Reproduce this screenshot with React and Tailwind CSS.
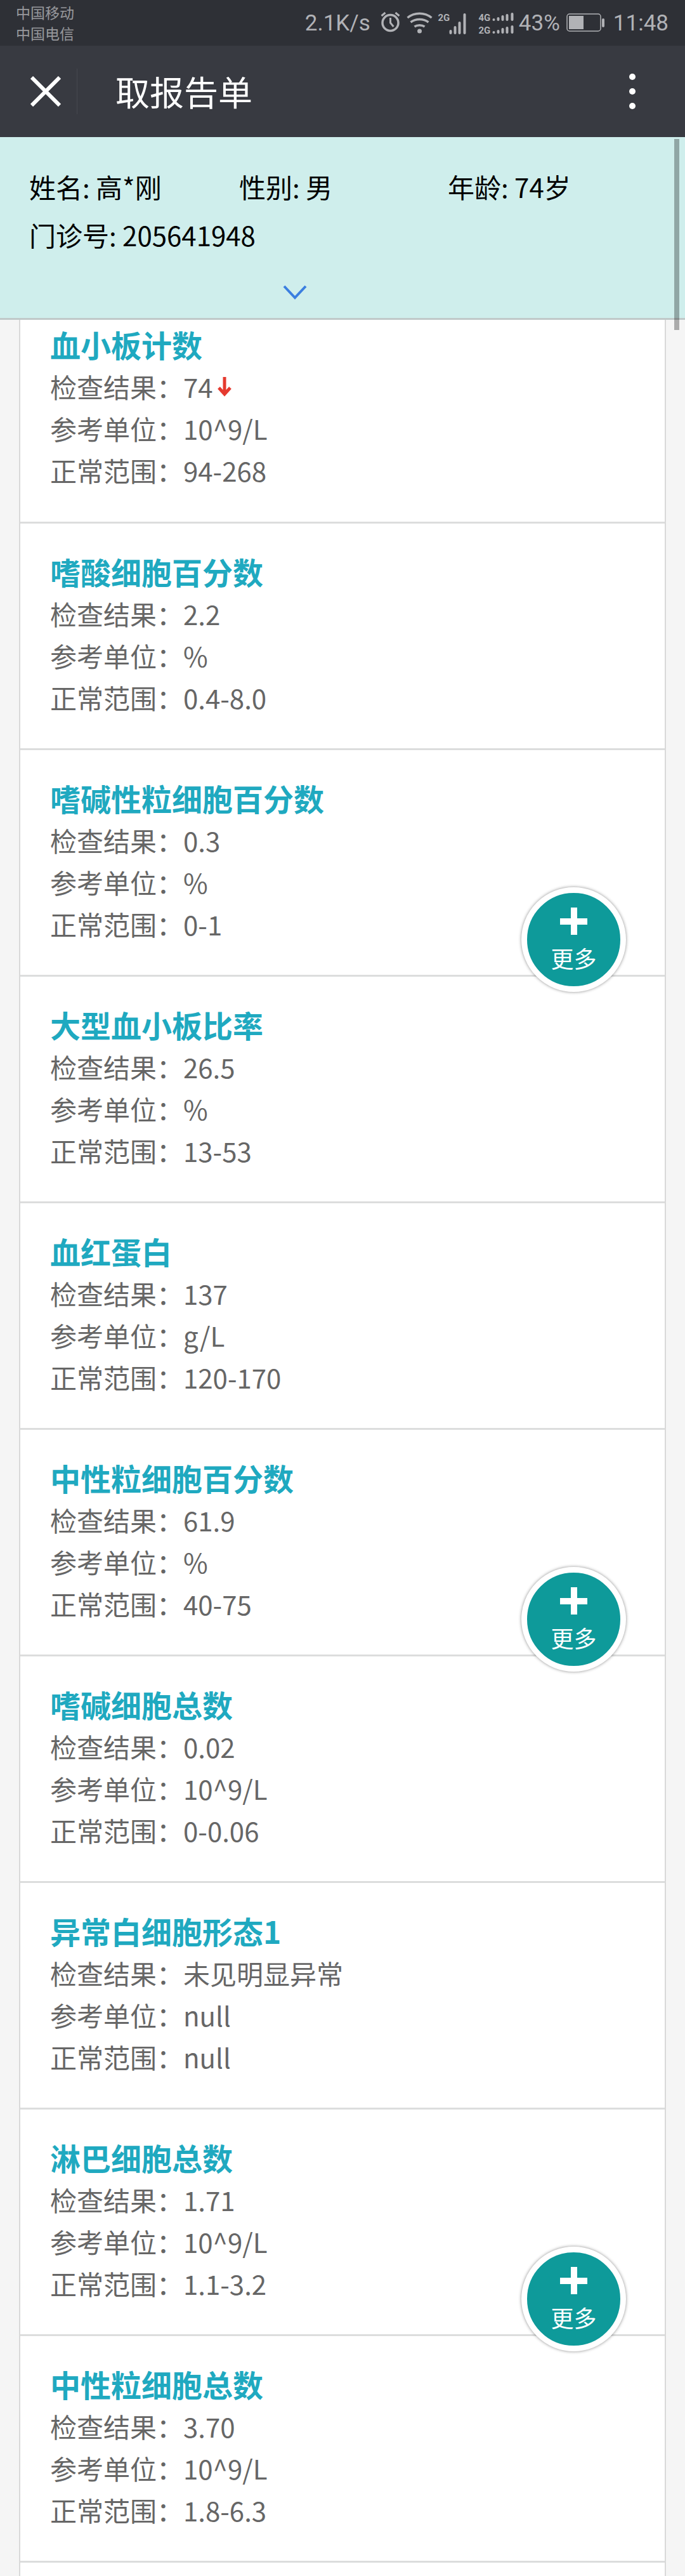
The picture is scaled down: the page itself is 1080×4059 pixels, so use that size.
import React from 'react';

const cards = [
  { name: '血小板计数', result: '74', unit: '10^9/L', range: '94-268', low: true },
  { name: '嗜酸细胞百分数', result: '2.2', unit: '%', range: '0.4-8.0' },
  { name: '嗜碱性粒细胞百分数', result: '0.3', unit: '%', range: '0-1', more: true },
  { name: '大型血小板比率', result: '26.5', unit: '%', range: '13-53' },
  { name: '血红蛋白', result: '137', unit: 'g/L', range: '120-170' },
  { name: '中性粒细胞百分数', result: '61.9', unit: '%', range: '40-75', more: true },
  { name: '嗜碱细胞总数', result: '0.02', unit: '10^9/L', range: '0-0.06' },
  { name: '异常白细胞形态1', result: '未见明显异常', unit: 'null', range: 'null' },
  { name: '淋巴细胞总数', result: '1.71', unit: '10^9/L', range: '1.1-3.2', more: true },
  { name: '中性粒细胞总数', result: '3.70', unit: '10^9/L', range: '1.8-6.3' },
];

const cjk = "font-['Noto_Sans_CJK_SC','Noto_Sans',sans-serif]";

const StatusIcons = () => (
  <svg width="215" height="40" viewBox="0 0 212 40" className="ml-[12px] shrink-0 text-[#b1b2b6]" fill="none">
    {/* alarm */}
    <circle cx="18" cy="20" r="12.5" stroke="currentColor" strokeWidth="3.5" />
    <path d="M18 12v8l5 6M4 9l6-5M32 9l-6-5" stroke="currentColor" strokeWidth="3" />
    {/* wifi */}
    <path d="M45 12c11-9 27-9 38 0M50 19c8-6 20-6 28 0M56 26c4-3 12-3 16 0" stroke="currentColor" strokeWidth="3.5" />
    <circle cx="64" cy="33" r="3.5" fill="currentColor" />
    {/* sim 1 */}
    <text x="93" y="17" fontSize="15" fontWeight="700" fill="currentColor" fontFamily="Roboto">2G</text>
    <rect x="111" y="31" width="4" height="7" rx="2" fill="currentColor" />
    <rect x="118" y="25" width="4" height="13" rx="2" fill="currentColor" />
    <rect x="125" y="18" width="4" height="20" rx="2" fill="currentColor" />
    <rect x="133" y="5" width="4" height="33" rx="2" fill="currentColor" />
    {/* sim 2 */}
    <text x="157" y="17" fontSize="15" fontWeight="700" fill="currentColor" fontFamily="Roboto">4G</text>
    <text x="157" y="37" fontSize="15" fontWeight="700" fill="currentColor" fontFamily="Roboto">2G</text>
    {[0, 20].map((dy) => (
      <g key={dy} fill="currentColor">
        <rect x="179" y={13 + dy} width="4" height="4" rx="2" />
        <rect x="186" y={11 + dy} width="4" height="6" rx="2" />
        <rect x="193" y={8 + dy} width="4" height="9" rx="2" />
        <rect x="200" y={6 + dy} width="4" height="11" rx="2" />
        <rect x="208" y={4 + dy} width="4" height="13" rx="2" />
      </g>
    ))}
  </svg>
);

const Battery = () => (
  <svg width="62" height="32" viewBox="0 0 62 32" className="ml-[10px] shrink-0" fill="none">
    <rect x="1" y="2" width="53" height="27" rx="4" stroke="#b1b2b6" strokeWidth="1.5" />
    <rect x="4" y="5" width="23" height="21" fill="#b1b2b6" />
    <rect x="56" y="9" width="4" height="14" rx="2" fill="#b1b2b6" />
  </svg>
);

const StatusBar = () => (
  <div className="flex h-[72px] items-center justify-between bg-[#2e3036] pl-[25px] pr-[26px]">
    <div className={`${cjk} flex flex-col text-[23px] leading-[33px] text-[#97989c]`}>
      <span>中国移动</span>
      <span>中国电信</span>
    </div>
    <div className="flex items-center font-['Roboto',sans-serif] text-[35px] leading-none text-[#b1b2b6]">
      <span>2.1K/s</span>
      <StatusIcons />
      <span className="ml-[7px]">43%</span>
      <Battery />
      <span className="ml-[12px]">11:48</span>
    </div>
  </div>
);

const NavBar = () => (
  <div className="flex h-[144px] items-center bg-[#383a41] pl-[48px] pr-[78px]">
    <svg width="48" height="48" viewBox="0 0 48 48" className="shrink-0">
      <path d="M2 2l44 44M46 2L2 46" stroke="white" strokeWidth="6" />
    </svg>
    <div className="ml-[25px] h-[72px] w-px bg-[#46484f]" />
    <h1 className={`${cjk} ml-[60px] text-[54px] leading-none text-white`}>取报告单</h1>
    <div className="ml-auto flex flex-col gap-[13px]">
      <span className="size-[10px] rounded-full bg-white" />
      <span className="size-[10px] rounded-full bg-white" />
      <span className="size-[10px] rounded-full bg-white" />
    </div>
  </div>
);

const PatientPanel = () => (
  <div className={`${cjk} h-[288px] border-b-[3px] border-[#c0c9c9] bg-[#cfeeec] pl-[46px] pt-[40px] text-[42px] leading-[76px] text-black`}>
    <div className="grid grid-cols-[331px_329px_1fr]">
      <span>姓名: 高*刚</span>
      <span>性别: 男</span>
      <span>年龄: 74岁</span>
    </div>
    <div>门诊号: 205641948</div>
    <div className="mt-[40px] flex justify-center pr-[196px]">
      <svg width="38" height="24" viewBox="0 0 38 24" fill="none">
        <path d="M2 3l17 18L36 3" stroke="#3b7fe0" strokeWidth="4" />
      </svg>
    </div>
  </div>
);

const MoreButton = () => (
  <button className="absolute right-[61px] top-[216px] z-10 flex size-[165px] flex-col items-center rounded-full border-[9px] border-white bg-[#0e9a9a] shadow-[0_0_5px_rgba(0,0,0,0.45)]">
    <span className="relative mt-[23px] block size-[43px] shrink-0">
      <span className="absolute left-0 top-[17px] h-[10px] w-[43px] bg-white" />
      <span className="absolute left-[17px] top-0 h-[43px] w-[10px] bg-white" />
    </span>
    <span className={`${cjk} mt-[16px] text-[36px] leading-[40px] text-white`}>更多</span>
  </button>
);

const Row = ({ label, children }) => (
  <div className="flex h-[66px] items-center whitespace-nowrap">
    <span className="w-[210px] shrink-0">{label}：</span>
    {children}
  </div>
);

const ResultCard = ({ card, first }) => (
  <div className={`relative border-b-[3px] border-b-[#dcdddd] bg-white pl-[47px] ${first ? 'h-[321px] pt-[5px]' : 'h-[357px] pt-[42px]'}`}>
    <h3 className="h-[66px] text-[48px] font-bold leading-[66px] text-[#1fa9c0]">{card.name}</h3>
    <Row label="检查结果">
      <span>{card.result}</span>
      {card.low && (
        <svg width="24" height="36" viewBox="0 0 24 36" className="ml-[6px]" fill="none">
          <path d="M12 4v27M3 21l9 10 9-10" stroke="#e53a2f" strokeWidth="5" />
        </svg>
      )}
    </Row>
    <Row label="参考单位">{card.unit}</Row>
    <Row label="正常范围">{card.range}</Row>
    {card.more && <MoreButton />}
  </div>
);

export default function App() {
  return (
    <div className={`${cjk} relative h-[4059px] w-[1080px] overflow-hidden bg-[#f5f5f5]`}>
      <StatusBar />
      <NavBar />
      <PatientPanel />
      <div className="mx-[30px] border-x-2 border-x-[#d9d9d9] text-[42px] text-[#666666]">
        {cards.map((card, i) => (
          <ResultCard key={card.name} card={card} first={i === 0} />
        ))}
        <div className="h-[40px] bg-white" />
      </div>
      {/* page scrollbar over the panel */}
      <div className="absolute right-[9px] top-[219px] h-[301px] w-[8px] bg-black/30" />
    </div>
  );
}
